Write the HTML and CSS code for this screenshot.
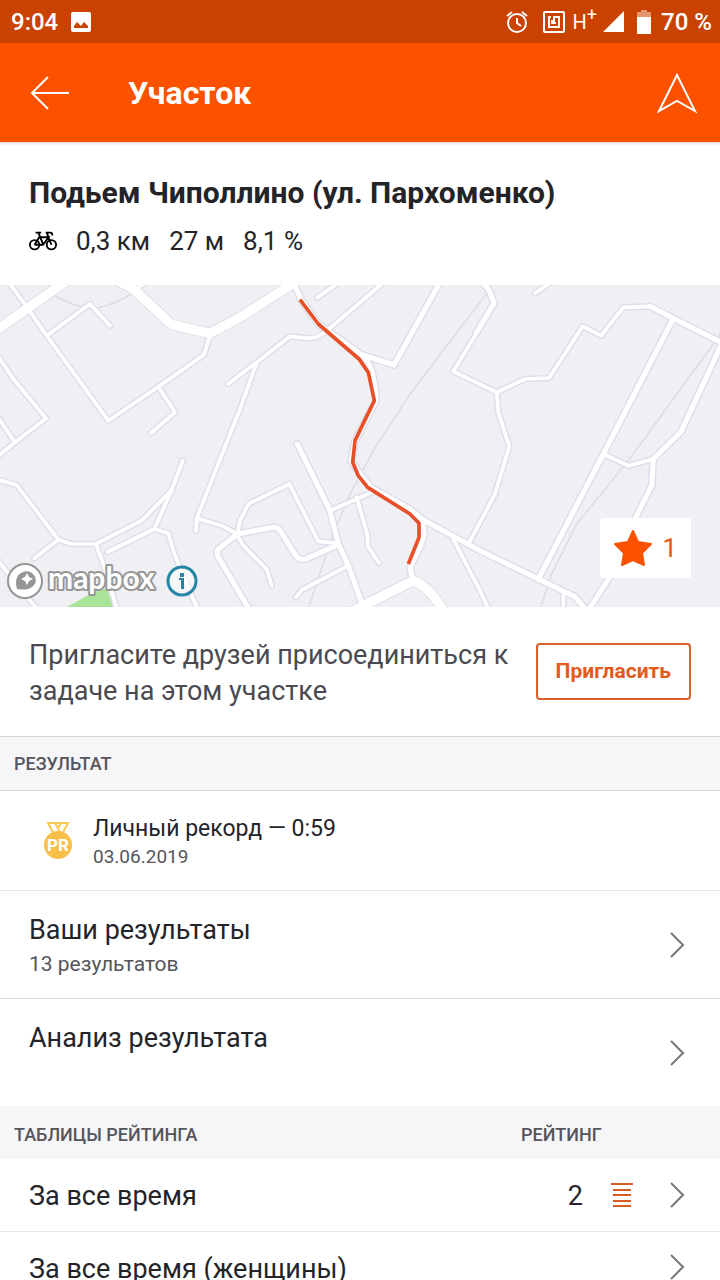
FILE: index.html
```html
<!DOCTYPE html>
<html lang="ru">
<head>
    <meta charset="UTF-8">
    <meta name="viewport" content="width=device-width, initial-scale=1.0">
    <title>Участок</title>
    <link rel="stylesheet" href="styles.css">
</head>
<body>
    <div class="status-bar">
        <span>9:04</span>
        <svg class="photo-icon" width="20" height="20" viewBox="0 0 20 20" aria-hidden="true">
            <path fill="#fff" fill-rule="evenodd" d="M2 0h16a2 2 0 0 1 2 2v16a2 2 0 0 1-2 2H2a2 2 0 0 1-2-2V2a2 2 0 0 1 2-2zM3 16h14v-2l-4-4-3 4-4-4-3 4z"/>
        </svg>
        <div class="status-right">
            <svg width="24" height="24" viewBox="0 0 24 24" fill="none" stroke="#fff" stroke-width="2" aria-hidden="true">
                <circle cx="12" cy="13" r="9"/>
                <path d="M12 8v5l4 3M2 6l5-4M22 6l-5-4"/>
            </svg>
            <svg class="nfc-icon" width="22" height="22" viewBox="0 0 22 22" fill="none" stroke="#fff" stroke-width="2" aria-hidden="true">
                <rect x="1" y="1" width="20" height="20" rx="1"/>
                <path d="M8 6H6v10h10V6h-5v6M9 9v3h4"/>
            </svg>
            <span class="network">H<sup>+</sup></span>
            <svg width="21" height="21" viewBox="0 0 21 21" aria-hidden="true">
                <path fill="#fff" d="M21 0v21H0z"/>
            </svg>
            <svg class="battery-icon" width="14" height="24" viewBox="0 0 14 24" aria-hidden="true">
                <path fill="#e5976f" d="M4 0h6v2h4v6H0V2h4z"/>
                <path fill="#fff" d="M0 7h14v16a1 1 0 0 1-1 1H1a1 1 0 0 1-1-1z"/>
            </svg>
            <span>70 %</span>
        </div>
    </div>

    <header class="app-bar">
        <button type="button" class="icon-button" aria-label="Назад">
            <svg width="40" height="36" viewBox="0 0 40 36" fill="none" stroke="#fff" stroke-width="2">
                <path d="M39 18H2M18 2L2 18l16 16"/>
            </svg>
        </button>
        <h1>Участок</h1>
        <button type="button" class="icon-button" aria-label="Маршрут">
            <svg width="42" height="42" viewBox="0 0 42 42" fill="none" stroke="#fff" stroke-width="2">
                <path d="M21 3l18 36-18-10L3 39z"/>
            </svg>
        </button>
    </header>

    <main>
        <section class="segment">
            <h2>Подьем Чиполлино (ул. Пархоменко)</h2>
            <div class="stats">
                <svg width="28" height="20" viewBox="0 0 30 20" fill="none" stroke="#000" stroke-width="2" aria-hidden="true">
                    <circle cx="6" cy="14" r="5"/>
                    <circle cx="24" cy="14" r="5"/>
                    <path d="M7 1h6M10 1l5 12M6 14l5-8h10l-6 8H6M24 14L19 1h4q2 0 2 3"/>
                </svg>
                <span>0,3 км</span>
                <span>27 м</span>
                <span>8,1 %</span>
            </div>
        </section>

        <section class="map">
            <svg class="map-canvas" viewBox="0 3 2160 966" preserveAspectRatio="xMidYMid slice" aria-hidden="true">
                <defs>
                    <g id="streets">
                        <path d="M30 0L85 75L140 155L325 410L475 308L612 212L628 160"/>
                        <path d="M140 155L270 60L330 125"/>
                        <path d="M475 308L525 385L453 447"/>
                        <path d="M-10 210L40 285L138 403L45 475L-10 520M-10 395L45 475"/>
                        <path d="M-10 586L50 603L175 767L215 780L287 780L425 710L515 618L548 530"/>
                        <path d="M175 767L103 823M515 618L463 735L322 804"/>
                        <path d="M463 735L505 748L520 800L545 865L595 980M287 780L310 840L352 980"/>
                        <path d="M-10 825L115 980"/>
                        <path d="M685 300L720 272L770 235L870 157L925 163Q950 163 975 145L1145 0"/>
                        <path d="M770 235L720 375L590 703L588 740M590 703L665 725L712 750"/>
                        <path d="M712 750L720 710L745 660L868 600L955 772L1015 778"/>
                        <path d="M712 755L730 785L800 855L815 905"/>
                        <path d="M990 680L1115 625M1070 640L1103 755L1103 785L1137 837"/>
                        <path d="M1045 845L905 918L888 940"/>
                        <path d="M953 40L1010 0M1605 28L1650 -3M415 12L435 -5"/>
                        <path d="M1405 780L1440 715L1485 630L1528 487L1495 385L1490 325L1360 262L1440 130"/>
                        <path d="M1490 325L1575 285L1647 282L1748 127L1803 155L1870 70L1950 67"/>
                        <path d="M1810 510L1885 545L1960 525M1690 930L1690 980M1360 765L1440 920L1468 980"/>
                    </g>
                    <g id="roads">
                        <path d="M712 750L820 730Q835 729 842 742L885 812Q895 828 915 826L1015 782"/>
                        <path d="M712 750L655 795Q648 805 655 820L750 980"/>
                        <path d="M892 480L990 680L1015 780L1045 845L1090 970"/>
                        <path d="M880 -5L905 50L955 120L1085 212Q1125 245 1128 350L1065 470L1053 530L1080 570L1115 612L1230 675L1265 705L1273 750L1260 790L1230 850L1237 885"/>
                        <path d="M1085 212L1182 243L1320 -5"/>
                        <path d="M1265 705L1440 800L1615 885L1725 938L1760 980"/>
                        <path d="M1430 145L1482 58L1468 20L1448 -5"/>
                        <path d="M1950 67L2020 103L2170 178M2020 103L1810 510L1615 885"/>
                        <path d="M1960 525L2042 445L2165 180M1960 525L1955 605L1885 745L1835 870L1765 980"/>
                    </g>
                    <g id="highways">
                        <path d="M-15 142L200 -10M345 -15L400 15L515 122L630 148L720 100L885 -5"/>
                        <path d="M1060 980L1240 890Q1290 910 1330 980"/>
                    </g>
                </defs>
                <path class="park" d="M195 972L275 928L322 912L342 972z"/>
                <path class="trail" d="M165 35Q230 75 290 72Q350 60 400 25M1475 10L1440 55L1230 330L1120 500L1050 630L1000 750L925 972M2170 135L2140 180L1885 530L1730 720L1655 870L1620 975"/>
                <use href="#streets" class="street casing"/>
                <use href="#roads" class="road casing"/>
                <use href="#highways" class="highway casing"/>
                <use href="#streets" class="street"/>
                <use href="#roads" class="road"/>
                <use href="#highways" class="highway"/>
                <path class="route" d="M900 47L955 120L1077 225L1105 265L1123 350L1065 470L1058 535L1075 575L1103 610L1230 690L1257 718L1257 760L1225 840"/>
            </svg>
            <div class="attribution">
                <svg width="160" height="40" viewBox="0 0 160 40" role="img" aria-label="mapbox">
                    <circle cx="19" cy="20" r="17" fill="#fff" stroke="#969696" stroke-width="2"/>
                    <path fill="#969696" d="M11 28c-2-7-1-13 4-16 5-3 10-2 13 2 3 5 2 9-2 12-4 3-9 3-15 2z"/>
                    <path fill="#fff" d="M21 12l2 4 4 2-4 2-2 4-2-4-4-2 4-2z"/>
                    <text class="logo-text" x="42" y="28">mapbox</text>
                </svg>
                <button type="button" class="icon-button" aria-label="Информация о карте">
                    <svg width="32" height="32" viewBox="0 0 32 32">
                        <circle cx="16" cy="16" r="14" fill="#fff" fill-opacity="0.5" stroke="#2585a5" stroke-width="3"/>
                        <path fill="#2585a5" d="M14 8h4v4h-4zM13 13h5v11h-3v-9h-2z"/>
                    </svg>
                </button>
            </div>
            <button type="button" class="star-button" aria-label="В избранном: 1">
                <svg width="38" height="36" viewBox="0 0 38 36">
                    <path fill="#fc5200" stroke="#fc5200" stroke-width="2" stroke-linejoin="round" d="M19 1l5 11 13 2-9 9 2 12-11-5-11 5 2-12L1 14l13-2z"/>
                </svg>
                <span>1</span>
            </button>
        </section>

        <section class="invite">
            <p>Пригласите друзей присоединиться к задаче на этом участке</p>
            <button type="button" class="invite-button">Пригласить</button>
        </section>

        <h3 class="section-title">Результат</h3>
        <div class="record">
            <svg width="30" height="40" viewBox="0 0 30 40" aria-hidden="true">
                <path fill="none" stroke="#f8c851" stroke-width="2" d="M5 2h20l-6 11h-8zM12 2l6 11M18 2l-3 5"/>
                <circle cx="15" cy="24" r="14" fill="#f8c04b"/>
                <text class="medal-text" x="15" y="30">PR</text>
            </svg>
            <div class="record-text">
                <p class="record-title">Личный рекорд — 0:59</p>
                <p class="record-date">03.06.2019</p>
            </div>
        </div>
        <a href="#results" class="row">
            <span class="row-text">Ваши результаты<small>13 результатов</small></span>
            <svg class="chevron" width="16" height="28" viewBox="0 0 16 28"><path d="M2 2l12 12L2 26"/></svg>
        </a>
        <a href="#analysis" class="row">
            <span class="row-text">Анализ результата</span>
            <svg class="chevron" width="16" height="28" viewBox="0 0 16 28"><path d="M2 2l12 12L2 26"/></svg>
        </a>

        <table class="leaderboards">
            <thead>
                <tr>
                    <th scope="col">Таблицы рейтинга</th>
                    <th scope="col" class="rank">Рейтинг</th>
                    <td class="list-cell"></td>
                    <td class="chevron-cell"></td>
                </tr>
            </thead>
            <tbody>
                <tr>
                    <td><a href="#all-time">За все время</a></td>
                    <td class="rank">2</td>
                    <td class="list-cell">
                        <svg width="22" height="26" viewBox="0 0 22 26" stroke="#d95b22" stroke-width="2" aria-hidden="true">
                            <path d="M0 2h22M2 8h18M2 13h18M2 19h18M2 24h18"/>
                        </svg>
                    </td>
                    <td class="chevron-cell"><svg class="chevron" width="16" height="28" viewBox="0 0 16 28"><path d="M2 2l12 12L2 26"/></svg></td>
                </tr>
                <tr>
                    <td><a href="#all-time-women">За все время (женщины)</a></td>
                    <td class="rank"></td>
                    <td class="list-cell"></td>
                    <td class="chevron-cell"><svg class="chevron" width="16" height="28" viewBox="0 0 16 28"><path d="M2 2l12 12L2 26"/></svg></td>
                </tr>
            </tbody>
        </table>
    </main>
</body>
</html>
```
FILE: styles.css
```css
* {
    margin: 0;
    padding: 0;
    box-sizing: border-box;
}

body {
    font-family: Roboto, "Noto Sans", sans-serif;
    background-color: #fff;
    color: #242428;
    font-size: 27px;
}

svg {
    display: block;
    flex-shrink: 0;
}

button {
    font-family: inherit;
    cursor: pointer;
}

a {
    color: inherit;
    text-decoration: none;
}

.icon-button {
    background: none;
    border: none;
}

.status-bar {
    display: flex;
    align-items: center;
    height: 43px;
    padding: 0 8px 0 11px;
    background-color: #ca4200;
    color: #fff;
    font-size: 24px;
    font-weight: 500;
}

.photo-icon {
    margin-left: 13px;
}

.status-right {
    display: flex;
    align-items: center;
    margin-left: auto;
}

.nfc-icon {
    margin: 0 8px 0 14px;
}

.network {
    margin-right: 6px;
    font-size: 20px;
    font-weight: normal;
}

.network sup {
    font-size: 18px;
    line-height: 1px;
}

.battery-icon {
    margin: 0 10px 0 13px;
}

.app-bar {
    display: flex;
    align-items: center;
    height: 99px;
    padding: 0 22px 0 30px;
    background-color: #fc5200;
    color: #fff;
    box-shadow: 0 1px 3px rgba(0, 0, 0, 0.2);
}

.app-bar h1 {
    flex: 1;
    margin-left: 58px;
    font-size: 32px;
}

.segment {
    padding: 32px 29px 26px;
}

.segment h2 {
    font-size: 30px;
    line-height: 38px;
}

.stats {
    display: flex;
    align-items: center;
    gap: 19px;
    margin-top: 11px;
    font-size: 26px;
    line-height: 36px;
}

.map {
    position: relative;
    background-color: #efeff4;
}

.map-canvas {
    width: 100%;
    height: auto;
    fill: none;
    stroke: #fff;
    stroke-linecap: round;
    stroke-linejoin: round;
}

.park {
    fill: #a9e398;
    stroke: none;
}

.trail {
    stroke: #dadae0;
    stroke-width: 4px;
}

.street {
    stroke-width: 11px;
}

.road {
    stroke-width: 15px;
}

.highway {
    stroke-width: 28px;
}

.casing {
    stroke: #dfdfe9;
}

.street.casing {
    stroke-width: 20px;
}

.road.casing {
    stroke-width: 24px;
}

.highway.casing {
    stroke-width: 34px;
}

.route {
    stroke: #e9502a;
    stroke-width: 11px;
    stroke-linecap: butt;
}

.attribution {
    position: absolute;
    left: 6px;
    bottom: 6px;
    display: flex;
    align-items: center;
}

.attribution svg {
    overflow: visible;
}

.logo-text {
    font-family: Lato, sans-serif;
    font-size: 30px;
    font-weight: bold;
    fill: #fff;
    stroke: #969696;
    stroke-width: 4px;
    stroke-linejoin: round;
    paint-order: stroke;
}

.star-button {
    position: absolute;
    right: 29px;
    bottom: 29px;
    display: flex;
    align-items: center;
    gap: 10px;
    height: 60px;
    padding: 0 14px;
    border: none;
    border-radius: 4px;
    background-color: #fff;
    color: #e6531b;
    font-size: 26px;
}

.invite {
    display: flex;
    align-items: center;
    gap: 24px;
    padding: 26px 29px 27px;
    color: #4a4a50;
}

.invite p {
    flex: 1;
    padding-top: 4px;
    line-height: 36px;
}

.invite-button {
    height: 57px;
    padding: 0 18px;
    border: 2px solid #da5f2a;
    border-radius: 4px;
    background-color: #fff;
    color: #e35a1b;
    font-size: 21px;
    font-weight: bold;
}

.section-title {
    padding: 0 14px;
    border-top: 1px solid #d6d6d8;
    border-bottom: 1px solid #d6d6d8;
    background-color: #f6f6f9;
    color: #55555b;
    font-size: 18px;
    font-weight: 500;
    line-height: 53px;
    text-transform: uppercase;
}

.record {
    display: flex;
    align-items: center;
    gap: 20px;
    height: 100px;
    padding: 0 43px;
    border-bottom: 1px solid #e8e8ea;
}

.record-text {
    padding-top: 5px;
}

.medal-text {
    fill: #fff;
    font-size: 17px;
    font-weight: bold;
    text-anchor: middle;
}

.record-title {
    font-size: 23px;
    line-height: 28px;
}

.record-date {
    color: #55555b;
    font-size: 19px;
    line-height: 28px;
}

.row {
    display: flex;
    align-items: center;
    height: 108px;
    padding: 0 35px 0 29px;
    border-bottom: 1px solid #dcdcde;
}

.row + .row {
    height: 107px;
    border-bottom: none;
}

.row-text {
    flex: 1;
    align-self: flex-start;
    padding-top: 22px;
    line-height: 34px;
}

.row-text small {
    display: block;
    color: #55555b;
    font-size: 21px;
}

.chevron {
    fill: none;
    stroke: #77777c;
    stroke-width: 2px;
}

.leaderboards {
    width: 100%;
    border-collapse: collapse;
    table-layout: fixed;
}

.leaderboards thead {
    background-color: #f6f6f9;
}

.leaderboards th {
    height: 53px;
    padding: 4px 0 0 14px;
    color: #55555b;
    font-size: 18px;
    font-weight: 500;
    text-align: left;
    text-transform: uppercase;
}

.leaderboards tbody td {
    height: 72px;
    border-bottom: 1px solid #e8e8ea;
}

.leaderboards tbody td:first-child {
    padding: 3px 0 0 29px;
}

.leaderboards .rank {
    width: 90px;
    padding: 3px 28px 0 0;
    text-align: right;
}

.leaderboards th.rank {
    padding: 4px 0 0;
    text-align: left;
}

.leaderboards .list-cell {
    width: 58px;
}

.leaderboards .chevron-cell {
    width: 51px;
}
```
